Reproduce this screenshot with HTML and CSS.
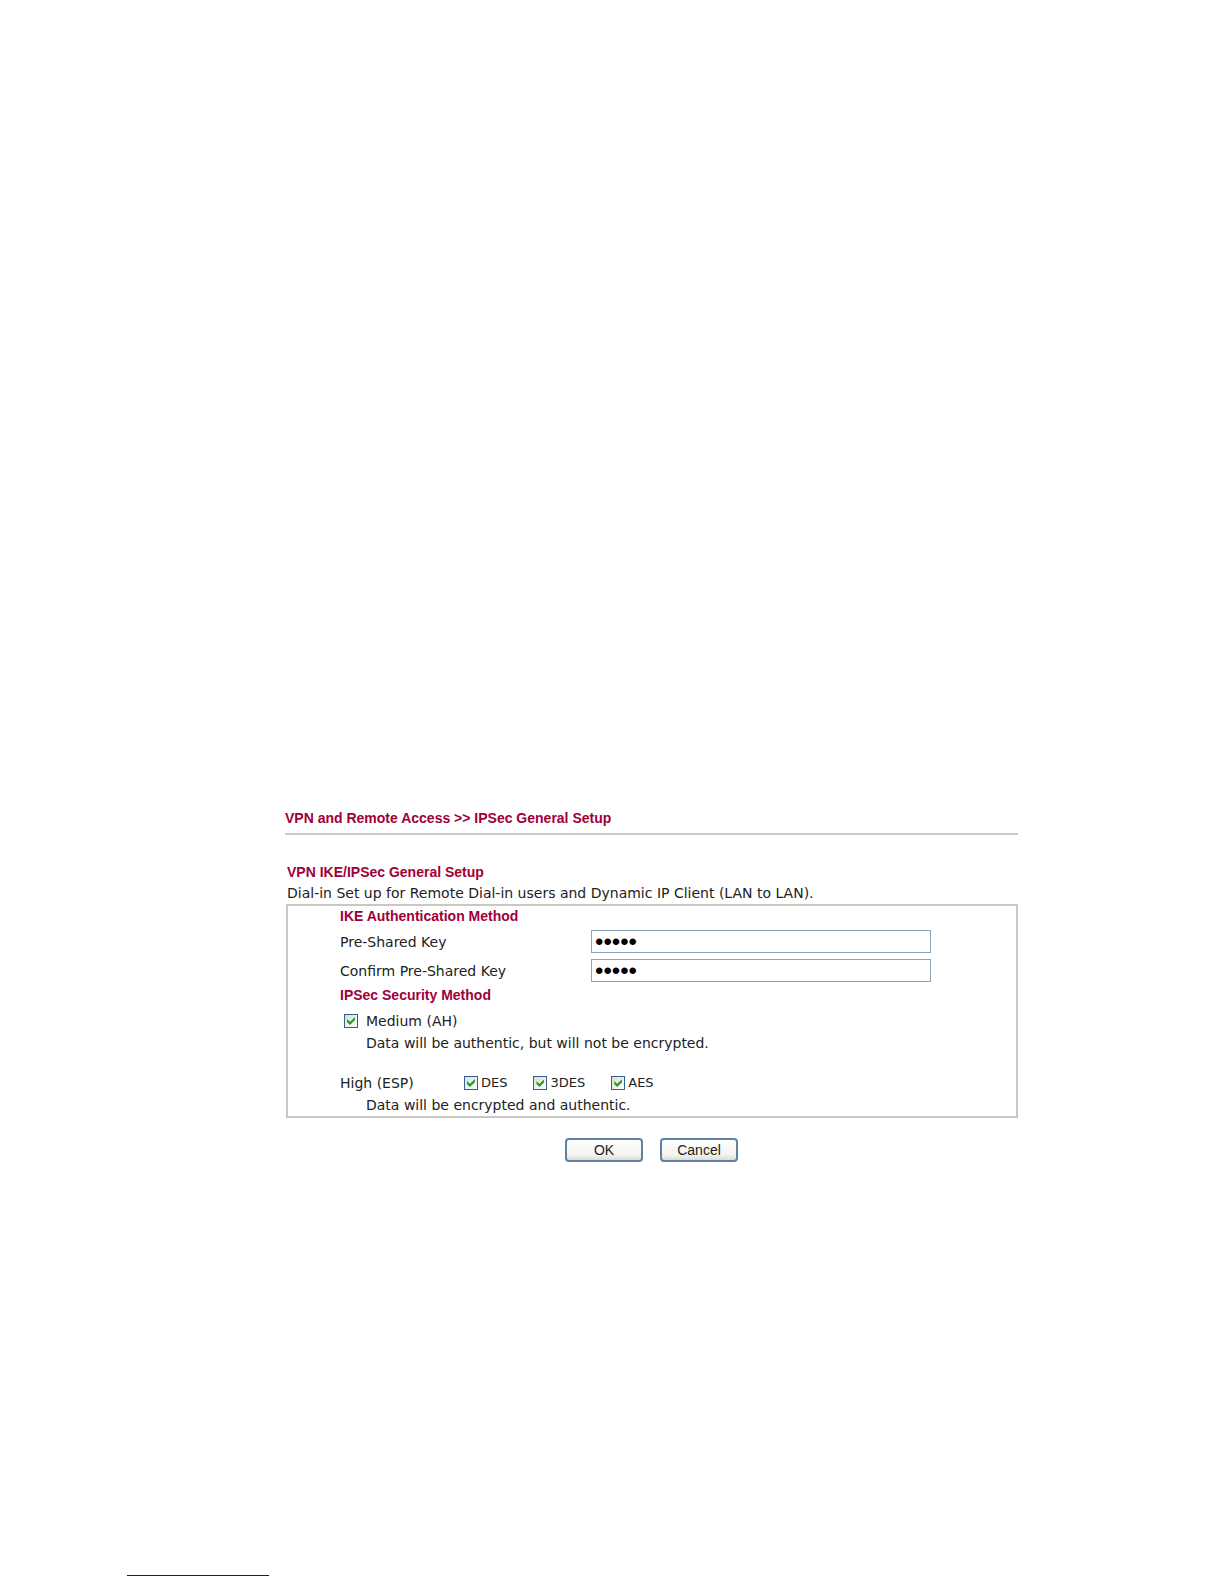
FILE: index.html
```
<!DOCTYPE html>
<html lang="en">
<head>
    <meta charset="UTF-8">
    <meta name="viewport" content="width=device-width, initial-scale=1.0">
    <title>IPSec General Setup</title>
    <link rel="stylesheet" href="styles.css">
</head>
<body>
    <main class="page">
        <h1 class="breadcrumb">VPN and Remote Access &gt;&gt; IPSec General Setup</h1>

        <h2 class="section-title">VPN IKE/IPSec General Setup</h2>
        <p class="intro">Dial-in Set up for Remote Dial-in users and Dynamic IP Client (LAN to LAN).</p>

        <form>
            <div class="panel">
                <h3>IKE Authentication Method</h3>
                <div class="key-row">
                    <label for="psk">Pre-Shared Key</label>
                    <input type="password" id="psk" value="12345">
                </div>
                <div class="key-row">
                    <label for="pskConfirm">Confirm Pre-Shared Key</label>
                    <input type="password" id="pskConfirm" value="12345">
                </div>

                <h3>IPSec Security Method</h3>
                <div class="row medium">
                    <input type="checkbox" id="medium" checked>
                    <label for="medium">Medium (AH)</label>
                </div>
                <p class="note">Data will be authentic, but will not be encrypted.</p>

                <div class="row high">
                    <span class="high-label">High (ESP)</span>
                    <label class="option"><input type="checkbox" checked>DES</label>
                    <label class="option"><input type="checkbox" checked>3DES</label>
                    <label class="option"><input type="checkbox" checked>AES</label>
                </div>
                <p class="note">Data will be encrypted and authentic.</p>
            </div>

            <div class="buttons">
                <button type="button">OK</button>
                <button type="reset">Cancel</button>
            </div>
        </form>
    </main>
    <footer>
        <hr class="footer-line">
    </footer>
</body>
</html>
```
FILE: styles.css
```
* {
    box-sizing: border-box;
}

body {
    margin: 0;
    min-height: 100vh;
    display: flex;
    flex-direction: column;
    justify-content: space-between;
    background: #fff;
    color: #222;
    font-family: "DejaVu Sans", Verdana, sans-serif;
    font-size: 14px;
    line-height: 22px;
}

h1, h2, h3, p {
    margin: 0;
}

h1, h2, h3 {
    color: #a00038;
    font-family: "Liberation Sans", Arial, sans-serif;
    font-size: 14px;
    font-weight: bold;
}

h3, .intro {
    line-height: 21px;
}

.page {
    padding: 807px 206px 0 285px;
}

.breadcrumb {
    padding-bottom: 4px;
    border-bottom: 2px solid #cbcbc8;
    margin-bottom: 26px;
}

.section-title, .intro {
    padding-left: 2px;
}

.panel {
    border: 2px solid #c8c8c0;
    margin-left: 1px;
    padding: 0 85px 0 52px;
}

.key-row {
    display: grid;
    grid-template-columns: 251px 1fr;
    align-items: center;
    height: 29px;
}

.key-row input {
    width: 100%;
    height: 23px;
    padding: 0 3px;
    border: 1px solid #8aa4bd;
    background: #fff;
    color: #000;
    font-family: "Liberation Sans", Arial, sans-serif;
    font-size: 24px;
}

.row {
    display: flex;
    align-items: center;
}

.medium {
    gap: 8px;
    margin-top: 4px;
    padding-left: 4px;
}

.high {
    gap: 26px;
    margin-top: 18px;
}

.high-label {
    width: 98px;
}

.option {
    display: flex;
    align-items: center;
    gap: 3px;
    font-size: 13px;
}

input[type="checkbox"] {
    appearance: none;
    width: 14px;
    height: 14px;
    margin: 0;
    border: 1px solid #33608c;
    background: linear-gradient(135deg, #dcdcd7, #fff);
}

input[type="checkbox"]:checked::before {
    content: "";
    display: block;
    width: 8px;
    height: 8px;
    margin: 2px;
    background: #21a121;
    clip-path: polygon(0 25%, 37% 60%, 100% 0, 100% 38%, 37% 100%, 0 62%);
}

.note {
    padding-left: 26px;
}

.buttons {
    display: flex;
    justify-content: center;
    gap: 17px;
    margin-top: 20px;
}

.buttons button {
    width: 78px;
    height: 24px;
    padding: 0;
    border: 2px solid #5c83a6;
    border-radius: 4px;
    background: linear-gradient(#fff, #f3f3ef 75%, #dcdad2);
    color: #222;
    font-family: "Liberation Sans", Arial, sans-serif;
    font-size: 14px;
}

.footer-line {
    width: 142px;
    height: 1px;
    margin: 0 0 8px 127px;
    border: 0;
    background: #15157a;
}
```
